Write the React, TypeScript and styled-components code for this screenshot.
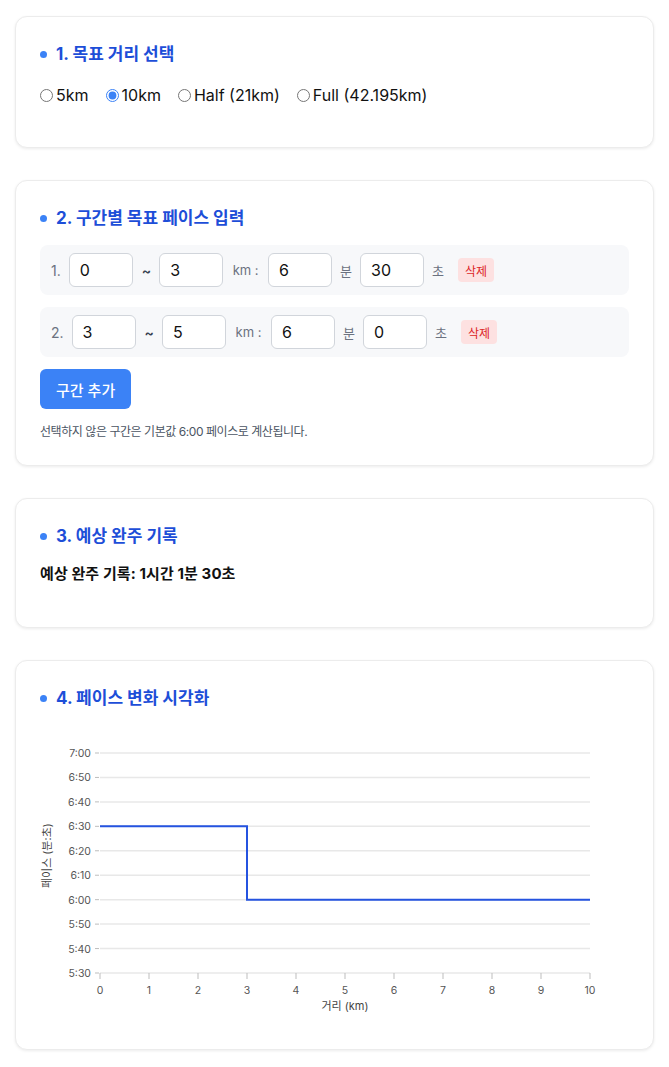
import React from "react";
import styled, { createGlobalStyle } from "styled-components";

const Global = createGlobalStyle`
  html, body { margin: 0; padding: 0; background: #ffffff; }
  body { font-family: Inter, "Noto Sans CJK KR", sans-serif; color: #111827; }
  * { box-sizing: border-box; }
`;

const Page = styled.div`
  padding: 16px 15px;
  display: flex;
  flex-direction: column;
  gap: 32px;
`;

const Card = styled.section`
  background: #fff;
  border: 1px solid #ececec;
  border-radius: 12px;
  box-shadow: 0 1px 3px rgba(0, 0, 0, 0.08);
  padding: 24px;
  display: flex;
  flex-direction: column;
`;

const Title = styled.h3`
  margin: 0 0 14px;
  font-size: 17px;
  line-height: 26px;
  font-weight: 700;
  color: #1d4ed8;
  display: flex;
  align-items: center;
  &::before {
    content: "";
    width: 7px;
    height: 7px;
    border-radius: 50%;
    background: #3b82f6;
    margin-right: 9px;
  }
`;

const RadioGroup = styled.div`
  display: flex;
  align-items: center;
  height: 28px;
  margin-bottom: 14px;
  gap: 17px;
`;

const RadioLabel = styled.label`
  display: flex;
  align-items: center;
  font-size: 16px;
  color: #111;
  input {
    width: 13px;
    height: 13px;
    margin: 0 3px 0 0;
    accent-color: #3b82f6;
  }
`;

const Segments = styled.div`
  display: flex;
  flex-direction: column;
  gap: 12px;
`;

const SegmentRow = styled.div`
  display: flex;
  align-items: center;
  gap: 8px;
  background: #f7f8fa;
  border-radius: 8px;
  padding: 8px 11px;
`;

const RowIndex = styled.span`
  font-size: 14px;
  color: #6b7280;
`;

const Unit = styled.span<{ $dark?: boolean; $pad?: string }>`
  font-size: ${(p) => (p.$dark ? "14px" : "13px")};
  font-weight: ${(p) => (p.$dark ? 600 : 400)};
  color: ${(p) => (p.$dark ? "#374151" : "#6b7280")};
  padding: ${(p) => p.$pad ?? "0"};
`;

const NumInput = styled.input`
  width: 64px;
  height: 34px;
  border: 1px solid #d1d5db;
  border-radius: 6px;
  background: #fff;
  padding: 0 10px;
  font-family: Inter, "Noto Sans CJK KR", sans-serif;
  font-size: 16px;
  color: #111;
  outline: none;
`;

const DeleteButton = styled.button`
  margin-left: 6px;
  height: 24px;
  padding: 0 7px;
  border: none;
  border-radius: 4px;
  background: #fde1e1;
  color: #dc2626;
  font-family: Inter, "Noto Sans CJK KR", sans-serif;
  font-size: 12px;
`;

const AddButton = styled.button`
  align-self: flex-start;
  margin-top: 12px;
  height: 40px;
  padding: 0 16px;
  border: none;
  border-radius: 6px;
  background: #3b82f6;
  color: #fff;
  font-family: Inter, "Noto Sans CJK KR", sans-serif;
  font-size: 15px;
  font-weight: 500;
`;

const Note = styled.p`
  margin: 14px 0 0;
  font-size: 12px;
  line-height: 18px;
  letter-spacing: -0.45px;
  color: #4b5563;
`;

const Result = styled.p`
  margin: 0 0 18px;
  font-size: 15px;
  line-height: 22px;
  font-weight: 700;
  letter-spacing: 0.1px;
  color: #111;
`;

const ChartSvg = styled.svg`
  display: block;
  font-family: Inter, "Noto Sans CJK KR", sans-serif;
`;

const segments = [
  { from: 0, to: 3, min: 6, sec: 30 },
  { from: 3, to: 5, min: 6, sec: 0 },
];

const X0 = 60;
const X1 = 550;
const YTOP = 28;
const YBOT = 248;
const xOf = (km: number) => X0 + ((X1 - X0) * km) / 10;
const yOf = (s: number) => YBOT - ((s - 330) / 90) * (YBOT - YTOP);
const fmt = (s: number) => `${Math.floor(s / 60)}:${String(s % 60).padStart(2, "0")}`;

function Chart() {
  const ticks = Array.from({ length: 10 }, (_, i) => 330 + i * 10);
  const xs = Array.from({ length: 11 }, (_, i) => i);
  const path = `M${xOf(0)},${yOf(390)} L${xOf(3)},${yOf(390)} L${xOf(3)},${yOf(360)} L${xOf(10)},${yOf(360)}`;
  return (
    <ChartSvg width={590} height={300} viewBox="0 0 590 300">
      {ticks.map((t) => (
        <g key={t}>
          <line x1={X0} x2={X1} y1={yOf(t)} y2={yOf(t)} stroke="#e8e8e8" strokeWidth={1.5} />
          <line x1={X0 - 5} x2={X0 - 1} y1={yOf(t)} y2={yOf(t)} stroke="#bdbdbd" strokeWidth={1} />
          <text x={X0 - 9} y={yOf(t) + 4} textAnchor="end" fontSize={10.5} fill="#555">
            {fmt(t)}
          </text>
        </g>
      ))}
      {xs.map((k) => (
        <g key={k}>
          <line x1={xOf(k)} x2={xOf(k)} y1={YBOT} y2={YBOT + 6} stroke="#bdbdbd" strokeWidth={1} />
          <text x={xOf(k)} y={YBOT + 21} textAnchor="middle" fontSize={10.5} fill="#555">
            {k}
          </text>
        </g>
      ))}
      <text x={(X0 + X1) / 2} y={285} textAnchor="middle" fontSize={11} fill="#444">
        거리 (km)
      </text>
      <text
        transform={`translate(11, ${yOf(378)}) rotate(-90)`}
        textAnchor="middle"
        fontSize={11}
        fill="#444"
      >
        페이스 (분:초)
      </text>
      <path d={path} fill="none" stroke="#2553e0" strokeWidth={2} />
    </ChartSvg>
  );
}

export default function App() {
  return (
    <>
      <Global />
      <Page>
        <Card>
          <Title>1. 목표 거리 선택</Title>
          <RadioGroup>
            {["5km", "10km", "Half (21km)", "Full (42.195km)"].map((d) => (
              <RadioLabel key={d}>
                <input type="radio" name="dist" defaultChecked={d === "10km"} />
                {d}
              </RadioLabel>
            ))}
          </RadioGroup>
        </Card>

        <Card>
          <Title>2. 구간별 목표 페이스 입력</Title>
          <Segments>
            {segments.map((s, i) => (
              <SegmentRow key={i}>
                <RowIndex>{i + 1}.</RowIndex>
                <NumInput defaultValue={s.from} />
                <Unit $dark $pad="0 0 0 1px">~</Unit>
                <NumInput defaultValue={s.to} />
                <Unit $pad="0 1.5px">km :</Unit>
                <NumInput defaultValue={s.min} />
                <Unit>분</Unit>
                <NumInput defaultValue={s.sec} />
                <Unit>초</Unit>
                <DeleteButton>삭제</DeleteButton>
              </SegmentRow>
            ))}
          </Segments>
          <AddButton>구간 추가</AddButton>
          <Note>선택하지 않은 구간은 기본값 6:00 페이스로 계산됩니다.</Note>
        </Card>

        <Card>
          <Title>3. 예상 완주 기록</Title>
          <Result>예상 완주 기록: 1시간 1분 30초</Result>
        </Card>

        <Card>
          <Title>4. 페이스 변화 시각화</Title>
          <Chart />
        </Card>
      </Page>
    </>
  );
}
